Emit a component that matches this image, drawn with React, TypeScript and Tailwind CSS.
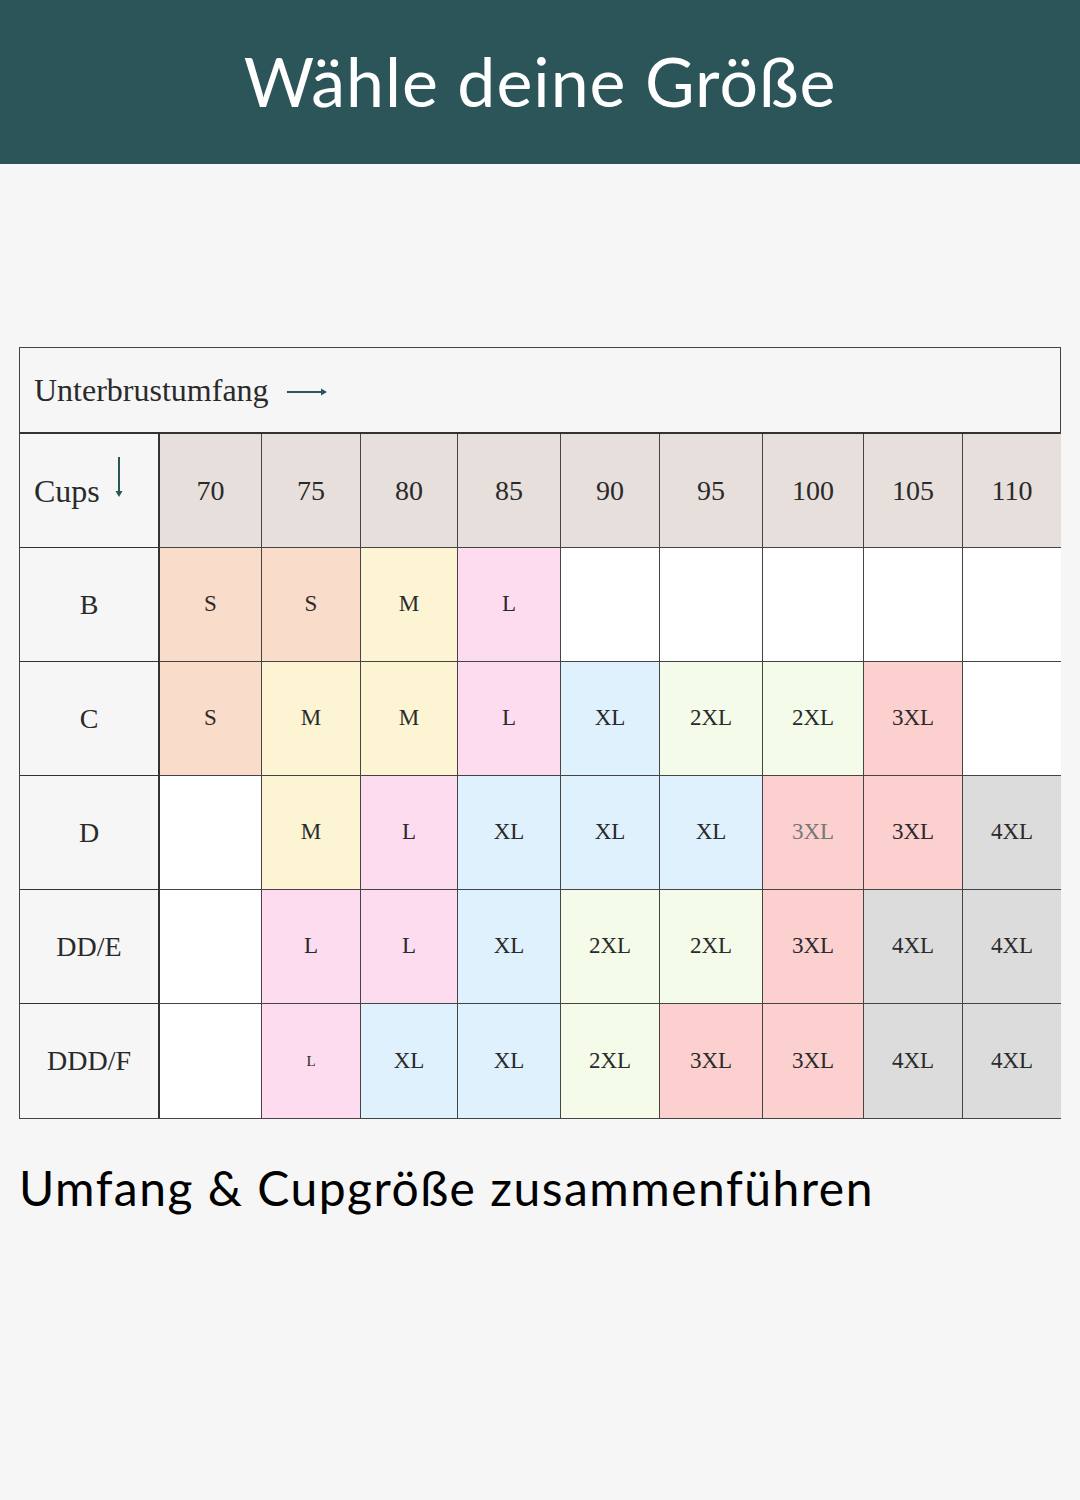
const sizes = ['70', '75', '80', '85', '90', '95', '100', '105', '110'];

const colors: Record<string, string> = {
  S: 'bg-[#fadccb]',
  M: 'bg-[#fdf4d4]',
  L: 'bg-[#fedcf0]',
  l: 'bg-[#fedcf0]',
  XL: 'bg-[#dff1fc]',
  '2XL': 'bg-[#f4fce9]',
  '3XL': 'bg-[#fdd0d0]',
  '3xl': 'bg-[#fdd0d0]',
  '4XL': 'bg-[#dcdcdc]',
  '': 'bg-white',
};

const rows: { cup: string; cells: string[] }[] = [
  { cup: 'B', cells: ['S', 'S', 'M', 'L', '', '', '', '', ''] },
  { cup: 'C', cells: ['S', 'M', 'M', 'L', 'XL', '2XL', '2XL', '3XL', ''] },
  { cup: 'D', cells: ['', 'M', 'L', 'XL', 'XL', 'XL', '3xl', '3XL', '4XL'] },
  { cup: 'DD/E', cells: ['', 'L', 'L', 'XL', '2XL', '2XL', '3XL', '4XL', '4XL'] },
  { cup: 'DDD/F', cells: ['', 'l', 'XL', 'XL', '2XL', '3XL', '3XL', '4XL', '4XL'] },
];

function label(v: string) {
  if (v === 'l') return <span className="text-[15px]">L</span>;
  if (v === '3xl') return <span className="text-[#777]">3XL</span>;
  return v;
}

export default function App() {
  return (
    <div className="min-h-[1500px] bg-[#f6f6f6] font-['Lato',sans-serif]">
      <header className="h-[164px] bg-[#2c5559] flex items-center justify-center">
        <h1 className="text-white text-[68px] tracking-[1px] pb-[2px]">Wähle deine Größe</h1>
      </header>

      <div className="mt-[183px] mx-[19px] font-['Liberation_Serif',serif] text-[#2a2a2a]">
        <div className="border border-[#444]">
          <div className="h-[86px] flex items-center pl-[14px] text-[32px] border-b-2 border-[#333]">
            Unterbrustumfang
            <svg width="42" height="10" viewBox="0 0 42 10" className="ml-[18px] mt-[4px]">
              <line x1="0" y1="5" x2="38" y2="5" stroke="#2c5559" strokeWidth="2" />
              <path d="M34 1.5 L40 5 L34 8.5 Z" fill="#2c5559" />
            </svg>
          </div>

          <div className="grid grid-cols-[140px_102px_99px_97px_103px_99px_103px_101px_99px_98px]">
            <div className="h-[114px] flex items-center pl-[14px] text-[32px] border-r-2 border-b border-[#333] bg-[#f6f6f6]">
              Cups
              <svg width="10" height="42" viewBox="0 0 10 42" className="ml-[14px] mb-[26px]">
                <line x1="5" y1="0" x2="5" y2="38" stroke="#2c5559" strokeWidth="2" />
                <path d="M1.5 34 L5 40 L8.5 34 Z" fill="#2c5559" />
              </svg>
            </div>
            {sizes.map((s, i) => (
              <div
                key={s}
                className={`h-[114px] flex items-center justify-center text-[28px] bg-[#e7dfdb] border-b border-[#444] ${i < 8 ? 'border-r' : ''}`}
              >
                {s}
              </div>
            ))}

            {rows.map((r, ri) => (
              <div key={r.cup} className="contents">
                <div
                  className={`h-[114px] flex items-center justify-center text-[28px] bg-[#f6f6f6] border-r-2 border-[#333] ${ri < 4 ? 'border-b' : ''}`}
                >
                  {r.cup}
                </div>
                {r.cells.map((c, ci) => (
                  <div
                    key={ci}
                    className={`h-[114px] flex items-center justify-center text-[23px] border-[#444] ${colors[c]} ${ci < 8 ? 'border-r' : ''} ${ri < 4 ? 'border-b' : ''}`}
                  >
                    {label(c)}
                  </div>
                ))}
              </div>
            ))}
          </div>
        </div>
      </div>

      <p className="mx-[19px] mt-[33px] text-[48px] tracking-[1.5px] text-black">Umfang &amp; Cupgröße zusammenführen</p>
    </div>
  );
}
